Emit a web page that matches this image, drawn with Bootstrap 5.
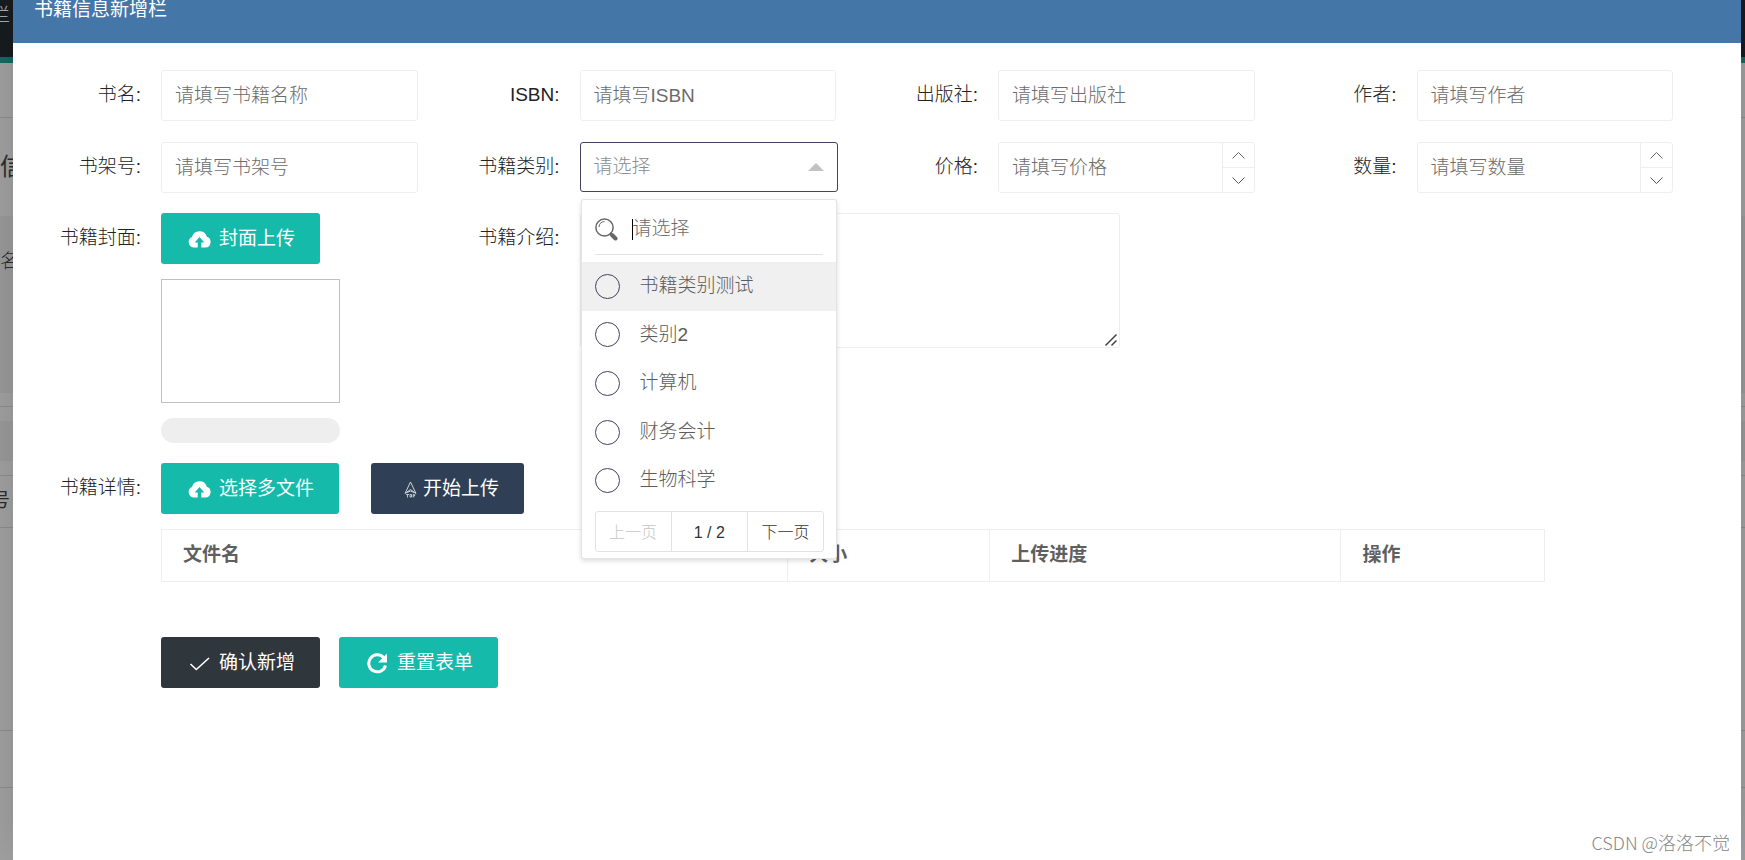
<!DOCTYPE html>
<html lang="zh-CN">
<head>
<meta charset="utf-8">
<meta name="viewport" content="width=device-width, initial-scale=1">
<title>书籍信息新增栏</title>
<link rel="stylesheet" href="https://cdn.jsdelivr.net/npm/bootstrap@5.3.0/dist/css/bootstrap.min.css">
<style>
  body { font-family: "Liberation Sans", "Noto Sans CJK SC", sans-serif; font-size: 19px; font-weight: 300; color: #222; min-height: 100vh; background: #9c9c9c; }
  button, input, textarea { font: inherit; color: inherit; }

  /* dimmed page behind the dialog */
  .backpage { position: absolute; inset: 0; overflow: hidden; background: #a2a2a2; color: #2c2c2c; white-space: nowrap; }
  .backpage > div { width: 100%; flex: none; display: flex; align-items: center; }
  .bp-nav { height: 63px; background: #171c20; border-bottom: 6px solid #126b63; color: #aaa; }
  .bp-clip { width: 10px; display: flex; justify-content: flex-end; overflow: hidden; }
  .bp-line { border-bottom: 1px solid #8e8e8e; }
  .bp-shade { background: #9b9b9b; }

  /* dialog */
  .dialog { position: relative; min-height: 100vh; margin: 0 4px 0 13px; background: #fff; box-shadow: 1px 1px 50px rgba(0,0,0,.16); }
  .dialog-head { height: 43px; padding: 0 21px; background: #4476a7; color: #fff; font-size: 19px; font-weight: 400; line-height: 20px; }
  .dialog-form { padding: 27px 27px 0; }
  .field-grid { row-gap: 21px; margin-bottom: 20px; }
  .field { display: flex; padding-right: 41px; }
  .field-label { flex: 0 0 121px; padding-right: 20px; text-align: right; line-height: 50px; white-space: nowrap; }
  .field-body { flex: 1 1 0; min-width: 0; position: relative; }

  .box { display: block; width: 100%; height: 51px; border: 1px solid #eee; border-radius: 3px; padding: 0 13px; background: #fff; outline: 0; }
  .box::placeholder, .search-box::placeholder { color: #6c6c6c; opacity: 1; }
  textarea.box { width: 100%; max-width: 540px; height: 135px; resize: none; }
  .grip { position: absolute; left: 524px; top: 120px; }
  .stepper { display: flex; border: 1px solid #eee; border-radius: 3px; height: 51px; }
  .stepper .box { border: 0; height: 49px; padding: 0 12px 0 13px; }
  .stepper-keys { flex: 0 0 32px; display: flex; flex-direction: column; border-left: 1px solid #eee; }
  .stepper-keys button { flex: 1; border: 0; background: none; padding: 0; display: flex; align-items: center; justify-content: center; }
  .stepper-keys button + button { border-top: 1px solid #eee; }

  .picker { display: flex; align-items: center; justify-content: space-between; height: 50px; width: calc(100% + 2px); border: 1px solid #47405f; color: #8c8c8c; text-align: left; }
  .picker-menu { position: absolute; z-index: 5; top: 57px; left: 1px; width: 100%; height: 360px; background: #fff; border: 1px solid #e4e4e4; border-radius: 3px; box-shadow: 0 2px 5px rgba(0,0,0,.14); color: #5c5c5c; display: flex; flex-direction: column; }
  .search-line { display: flex; align-items: center; height: 55px; margin: 0 13px 7px; padding-top: 4px; border-bottom: 1px solid #e4e4e4; }
  .caret { width: 1px; height: 21px; margin-left: 14px; background: #000; }
  .search-box { border: 0; padding: 0; outline: 0; flex: 1; min-width: 0; }
  .choices { height: 243px; display: flex; flex-direction: column; }
  .choice { flex: 1; display: flex; align-items: center; gap: 20px; padding: 0 13px; }
  .choice.active { background: #f0f0f0; }
  .choice input { appearance: none; width: 25px; height: 25px; border: 1px solid #47405f; border-radius: 50%; margin: 0; background: #fff0; }
  .pager { display: flex; height: 41px; margin: 6px 12px 0 13px; border: 1px solid #e2e2e2; border-radius: 3px; font-size: 16px; color: #333; }
  .pager > * { flex: 1 1 0; border: 0; background: none; padding: 2px 0 0; display: flex; align-items: center; justify-content: center; }
  .pager > * + * { border-left: 1px solid #e2e2e2; }
  .pager button:disabled { color: #c6c6c6; }

  .act { display: inline-flex; align-items: center; height: 51px; padding: 2px 25px 0 27px; gap: 8px; border: 0; border-radius: 3px; background: #16baaa; color: #fff; font-weight: 400; white-space: nowrap; }
  .act-navy { background: #2f4056; }
  .act-dark { background: #2f363c; }
  .act-start { margin-left: 32px; padding-left: 33px; gap: 6px; }
  .cover { width: 179px; height: 124px; border: 1px solid #c0c0c0; margin: 15px 0; }
  .cover-bar { width: 179px; height: 25px; border-radius: 13px; background: #eee; }
  .files { margin: 15px 0 55px; width: 89.1%; table-layout: fixed; border-collapse: collapse; color: #5f5f5f; }
  .files th { height: 52px; border: 1px solid #eee; padding: 0 21px; font-weight: 700; text-align: left; }
  .credit { position: absolute; right: 11px; bottom: 5px; font-family: "Noto Sans CJK SC", sans-serif; font-size: 18px; line-height: 26px; color: #888; }
</style>
</head>
<body>
<div class="backpage d-flex flex-column" aria-hidden="true">
  <div class="bp-nav"><span class="bp-clip mb-4">栏</span></div>
  <div class="bp-line" style="height:55px"></div>
  <div class="fw-normal" style="height:98px;font-size:24px">信息</div>
  <div class="bp-shade" style="height:177px;padding-bottom:84px"><span class="ms-n1">名称</span></div>
  <div class="bp-line" style="height:14px"></div>
  <div style="height:14px"></div>
  <div class="bp-shade" style="height:40px"></div>
  <div class="bp-line" style="height:15px"></div>
  <div class="bp-line" style="height:52px"><b class="bp-clip">号</b></div>
  <div class="bp-line" style="height:203px"></div>
  <div class="bp-line" style="height:57px"></div>
</div>

<main class="dialog">
  <header class="dialog-head">书籍信息新增栏</header>
  <form class="dialog-form">
    <div class="row g-0 field-grid">
      <div class="col-3 field"><label class="field-label" for="title">书名:</label><div class="field-body"><input class="box" id="title" placeholder="请填写书籍名称"></div></div>
      <div class="col-3 field"><label class="field-label" for="isbn">ISBN:</label><div class="field-body"><input class="box" id="isbn" placeholder="请填写ISBN"></div></div>
      <div class="col-3 field"><label class="field-label" for="press">出版社:</label><div class="field-body"><input class="box" id="press" placeholder="请填写出版社"></div></div>
      <div class="col-3 field"><label class="field-label" for="author">作者:</label><div class="field-body"><input class="box" id="author" placeholder="请填写作者"></div></div>

      <div class="col-3 field"><label class="field-label" for="shelf">书架号:</label><div class="field-body"><input class="box" id="shelf" placeholder="请填写书架号"></div></div>
      <div class="col-3 field"><label class="field-label" for="kind">书籍类别:</label>
        <div class="field-body">
          <button type="button" class="box picker" id="kind" aria-expanded="true"><span>请选择</span><svg width="16" height="8"><path d="M0 8L8 0l8 8z" fill="#c2c2c2"/></svg></button>
          <div class="picker-menu">
            <div class="search-line">
              <svg width="23" height="23" viewBox="0 0 23 23" fill="none" stroke="#666"><circle cx="9.500" cy="9.500" r="8.600" stroke-width="1.500"/><path d="M4 9a6 6 0 0 1 5.500-5.500" stroke-width="1"/><path d="M15 15l2 2" stroke-width="2"/><path d="M17 17l3.500 3.500" stroke-width="4" stroke-linecap="round"/></svg>
              <span class="caret"></span><input class="search-box" aria-label="搜索类别" placeholder="请选择">
            </div>
            <div class="choices">
              <label class="choice active"><input type="radio" name="kind">书籍类别测试</label>
              <label class="choice"><input type="radio" name="kind">类别2</label>
              <label class="choice"><input type="radio" name="kind">计算机</label>
              <label class="choice"><input type="radio" name="kind">财务会计</label>
              <label class="choice"><input type="radio" name="kind">生物科学</label>
            </div>
            <div class="pager"><button type="button" disabled>上一页</button><span>1 / 2</span><button type="button">下一页</button></div>
          </div>
        </div>
      </div>
      <div class="col-3 field"><label class="field-label" for="price">价格:</label>
        <div class="field-body stepper"><input class="box" id="price" placeholder="请填写价格">
          <div class="stepper-keys">
            <button type="button" aria-label="增加"><svg width="13" height="7" fill="none" stroke="#666"><path d="M.5 6.500l6-6 6 6"/></svg></button>
            <button type="button" aria-label="减少"><svg width="13" height="7" fill="none" stroke="#555"><path d="M.5.5l6 6 6-6"/></svg></button>
          </div></div></div>
      <div class="col-3 field"><label class="field-label" for="count">数量:</label>
        <div class="field-body stepper"><input class="box" id="count" placeholder="请填写数量">
          <div class="stepper-keys">
            <button type="button" aria-label="增加"><svg width="13" height="7" fill="none" stroke="#666"><path d="M.5 6.500l6-6 6 6"/></svg></button>
            <button type="button" aria-label="减少"><svg width="13" height="7" fill="none" stroke="#555"><path d="M.5.5l6 6 6-6"/></svg></button>
          </div></div></div>
    </div>

    <div class="row g-0 field-grid">
      <div class="col-3 field"><label class="field-label" for="cover">书籍封面:</label>
        <div class="field-body">
          <button type="button" class="act" id="cover"><svg width="23" height="17" viewBox="0 0 23 17"><path d="M5.500 16.500A5.500 5.500 0 0 1 4 6 7.700 7.700 0 0 1 18.800 5.800 5.500 5.500 0 0 1 17.500 16.500H13.300V11.500H16.300L11.500 6 6.700 11.500H9.700V16.500Z" fill="#fff"/></svg>封面上传</button>
          <div class="cover"></div>
          <div class="cover-bar" role="progressbar" aria-label="上传进度"></div>
        </div>
      </div>
      <div class="col-6 field"><label class="field-label" for="intro">书籍介绍:</label>
        <div class="field-body"><textarea class="box" id="intro"></textarea>
          <svg class="grip" width="14" height="14" fill="none" stroke="#444" stroke-width="1.500"><path d="M1.500 12.500l11-11M7.500 12.500l5-5"/></svg></div>
      </div>
    </div>

    <div class="d-flex">
      <label class="field-label" for="pick">书籍详情:</label>
      <div class="field-body">
        <div class="d-flex">
          <button type="button" class="act" id="pick"><svg width="23" height="17" viewBox="0 0 23 17"><path d="M5.500 16.500A5.500 5.500 0 0 1 4 6 7.700 7.700 0 0 1 18.800 5.800 5.500 5.500 0 0 1 17.500 16.500H13.300V11.500H16.300L11.500 6 6.700 11.500H9.700V16.500Z" fill="#fff"/></svg>选择多文件</button>
          <button type="button" class="act act-navy act-start"><svg width="13" height="17" viewBox="0 0 13 17" fill="none" stroke="#dfe3e8"><path d="M6.500 1L1 12.500l5.500-4 5.500 4L6.500 1M3 11.500l3.500-1.500 3.500 1.500" stroke-width=".9"/><path d="M2 13.500h3M3.500 13.500v3M6 13.500h1.500v2.500H6zM9.200 16.500v-3h1.500v1.500H9.200" stroke-width=".8"/></svg>开始上传</button>
        </div>
        <table class="files">
          <colgroup><col style="width:45.3%"><col style="width:14.6%"><col style="width:25.4%"><col style="width:14.7%"></colgroup>
          <thead><tr><th>文件名</th><th>大小</th><th>上传进度</th><th>操作</th></tr></thead>
        </table>
        <div class="d-flex" style="gap:19px">
          <button type="submit" class="act act-dark"><svg width="23" height="18" viewBox="0 0 23 18" fill="none" stroke="#fff" stroke-width="1.600"><path d="M2.500 9l5.800 5.500L21 3"/></svg>确认新增</button>
          <button type="reset" class="act"><svg width="23" height="21" viewBox="0 0 23 21"><path d="M17.500 4.500A8.500 8.500 0 1 0 19.500 12.500" fill="none" stroke="#fff" stroke-width="3"/><path d="M21 .5v9h-9z" fill="#fff"/></svg>重置表单</button>
        </div>
      </div>
    </div>
  </form>
  <div class="credit">CSDN @洛洛不觉</div>
</main>
<script src="https://cdn.jsdelivr.net/npm/bootstrap@5.3.0/dist/js/bootstrap.bundle.min.js"></script>
</body>
</html>
